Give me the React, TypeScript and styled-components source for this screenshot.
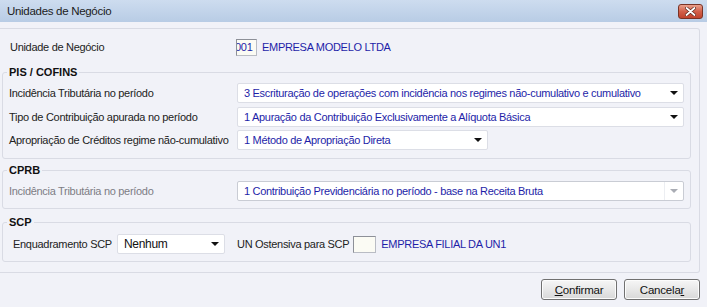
import React from 'react';
import styled, { createGlobalStyle } from 'styled-components';

// STYLES
const GlobalStyle = createGlobalStyle`
  html, body {
    margin: 0;
    padding: 0;
    background: #f1f2f8;
  }
  body {
    font-family: "Liberation Sans", Arial, sans-serif;
    font-size: 11px;
    letter-spacing: -0.3px;
    color: #222;
  }
`;

const Window = styled.div`
  width: 707px;
  height: 307px;
  display: flex;
  flex-direction: column;
  overflow: hidden;
  background: #f1f2f8;
`;

const TitleBar = styled.div`
  height: 22px;
  display: flex;
  align-items: center;
  justify-content: space-between;
  padding: 0 4px 0 7px;
  background: linear-gradient(#cddcef, #b8cce5);
  font-size: 11.5px;
  color: #1b1b1b;
`;

const CloseButton = styled.div`
  width: 25px;
  height: 15px;
  margin-top: 1px;
  box-sizing: border-box;
  border: 1px solid #7a3325;
  border-radius: 3px;
  background: linear-gradient(#e9a08c, #d2604a 50%, #c0432d);
  display: flex;
  align-items: center;
  justify-content: center;
`;

const Body = styled.div`
  flex: 1;
  display: flex;
  flex-direction: column;
  padding: 6px 7px 0 0;
`;

const MainPanel = styled.div`
  height: 245px;
  box-sizing: border-box;
  border: 1px solid #d9dbe4;
  border-left: none;
  border-radius: 0 3px 3px 0;
  padding: 9px 8px 0 2px;
  display: flex;
  flex-direction: column;
`;

const Row = styled.div<{ $height?: number; $indent?: number }>`
  display: flex;
  align-items: center;
  height: ${(p) => p.$height ?? 23}px;
  padding-left: ${(p) => p.$indent ?? 8}px;
  flex-shrink: 0;
`;

const Label = styled.div<{ $width?: number; $disabled?: boolean }>`
  width: ${(p) => (p.$width ? `${p.$width}px` : 'auto')};
  flex-shrink: 0;
  color: ${(p) => (p.$disabled ? '#7d7d85' : '#222')};
  white-space: nowrap;
`;

const InlineLabel = styled(Label)`
  margin: 0 4px 0 12px;
`;

const Group = styled.fieldset<{ $height: number }>`
  margin: 0;
  height: ${(p) => p.$height}px;
  flex-shrink: 0;
  box-sizing: border-box;
  border: 1px solid #d9dbe4;
  border-radius: 3px;
  padding: 0;
  min-width: 0;
`;

const Legend = styled.legend`
  margin-left: 4px;
  padding: 0 2px;
  font-weight: bold;
  font-size: 11px;
  letter-spacing: 0;
  color: #111;
`;

const GroupRows = styled.div<{ $offset?: number }>`
  display: flex;
  flex-direction: column;
  margin-top: ${(p) => p.$offset ?? 3}px;
`;

const Select = styled.div<{ $width: number; $disabled?: boolean; $plain?: boolean }>`
  width: ${(p) => p.$width}px;
  height: 20px;
  box-sizing: border-box;
  border: 1px solid ${(p) => (p.$disabled ? '#c9ccd4' : '#dcdee6')};
  border-radius: 2px;
  background: #fff;
  display: flex;
  align-items: center;
  padding-left: 6px;
  color: ${(p) => (p.$plain ? '#111' : '#1e1ea8')};
  font-size: ${(p) => (p.$plain ? '12px' : '11px')};
  white-space: nowrap;
  overflow: hidden;
`;

const SelectText = styled.span`
  flex: 1;
  overflow: hidden;
`;

const Arrow = styled.span<{ $disabled?: boolean }>`
  width: 18px;
  height: 100%;
  display: flex;
  align-items: center;
  justify-content: center;
  flex-shrink: 0;
  border-left: ${(p) => (p.$disabled ? '1px solid #eceef2' : 'none')};
  &::after {
    content: '';
    border-left: 4px solid transparent;
    border-right: 4px solid transparent;
    border-top: 4px solid ${(p) => (p.$disabled ? '#a9acb4' : '#111')};
  }
`;

const CodeBox = styled.div<{ $width: number }>`
  width: ${(p) => p.$width}px;
  height: 17px;
  flex-shrink: 0;
  box-sizing: border-box;
  border: 1px solid #b9bcc4;
  border-top-color: #8d9098;
  border-left-color: #8d9098;
  background: #fbfbf4;
  display: flex;
  align-items: center;
  overflow: hidden;
  color: #1e1ea8;
  font-size: 11px;
`;

const CodeText = styled.span`
  margin-left: -2px;
`;

const LinkText = styled.span`
  color: #1e1ea8;
  margin-left: 5px;
  white-space: nowrap;
`;

const Gap = styled.div<{ $size: number }>`
  height: ${(p) => p.$size}px;
  flex-shrink: 0;
`;

const Footer = styled.div`
  display: flex;
  justify-content: flex-end;
  gap: 7px;
  padding-top: 6px;
`;

const Button = styled.button`
  width: 76px;
  height: 21px;
  box-sizing: border-box;
  border: 1px solid #707070;
  border-radius: 3px;
  background: linear-gradient(#f6f6f6, #e8e8e8 50%, #d8d8d8);
  font-family: "Liberation Sans", Arial, sans-serif;
  font-size: 11.5px;
  letter-spacing: -0.2px;
  color: #111;
  padding: 0;
  box-shadow: inset 0 0 0 1px #fcfcfc;
`;

// COMPONENT
const App: React.FC = () => {
  return (
    <Window>
      <GlobalStyle />
      <TitleBar>
        <span>Unidades de Negócio</span>
        <CloseButton>
          <svg width="11" height="9" viewBox="0 0 11 9">
            <path d="M1.5 1 L9.5 8 M9.5 1 L1.5 8" stroke="#5a2418" strokeWidth="3.2" strokeLinecap="round" />
            <path d="M1.5 1 L9.5 8 M9.5 1 L1.5 8" stroke="#ffffff" strokeWidth="1.8" strokeLinecap="round" />
          </svg>
        </CloseButton>
      </TitleBar>

      <Body>
        <MainPanel>
          <Row $height={18}>
            <Label $width={226}>Unidade de Negócio</Label>
            <CodeBox $width={21}>
              <CodeText>001</CodeText>
            </CodeBox>
            <LinkText>EMPRESA MODELO LTDA</LinkText>
          </Row>

          <Gap $size={10} />

          <Group $height={93}>
            <Legend>PIS / COFINS</Legend>
            <GroupRows>
              <Row $height={24} $indent={6}>
                <Label $width={228}>Incidência Tributária no período</Label>
                <Select $width={447}>
                  <SelectText>3 Escrituração de operações com incidência nos regimes não-cumulativo e cumulativo</SelectText>
                  <Arrow />
                </Select>
              </Row>
              <Row $height={23} $indent={6}>
                <Label $width={228}>Tipo de Contribuição apurada no período</Label>
                <Select $width={447}>
                  <SelectText>1 Apuração da Contribuição Exclusivamente a Alíquota Básica</SelectText>
                  <Arrow />
                </Select>
              </Row>
              <Row $height={24} $indent={6}>
                <Label $width={228}>Apropriação de Créditos regime não-cumulativo</Label>
                <Select $width={251}>
                  <SelectText>1 Método de Apropriação Direta</SelectText>
                  <Arrow />
                </Select>
              </Row>
            </GroupRows>
          </Group>

          <Gap $size={5} />

          <Group $height={45}>
            <Legend>CPRB</Legend>
            <GroupRows>
              <Row $height={23} $indent={6}>
                <Label $width={228} $disabled>
                  Incidência Tributária no período
                </Label>
                <Select $width={447} $disabled>
                  <SelectText>1 Contribuição Previdenciária no período - base na Receita Bruta</SelectText>
                  <Arrow $disabled />
                </Select>
              </Row>
            </GroupRows>
          </Group>

          <Gap $size={7} />

          <Group $height={46}>
            <Legend>SCP</Legend>
            <GroupRows $offset={4}>
              <Row $height={24} $indent={10}>
                <Label $width={104}>Enquadramento SCP</Label>
                <Select $width={108} $plain>
                  <SelectText>Nenhum</SelectText>
                  <Arrow />
                </Select>
                <InlineLabel>UN Ostensiva para SCP</InlineLabel>
                <CodeBox $width={23} />
                <LinkText>EMPRESA FILIAL DA UN1</LinkText>
              </Row>
            </GroupRows>
          </Group>
        </MainPanel>

        <Footer>
          <Button>
            <u>C</u>onfirmar
          </Button>
          <Button>
            Cancela<u>r</u>
          </Button>
        </Footer>
      </Body>
    </Window>
  );
};

export default App;
